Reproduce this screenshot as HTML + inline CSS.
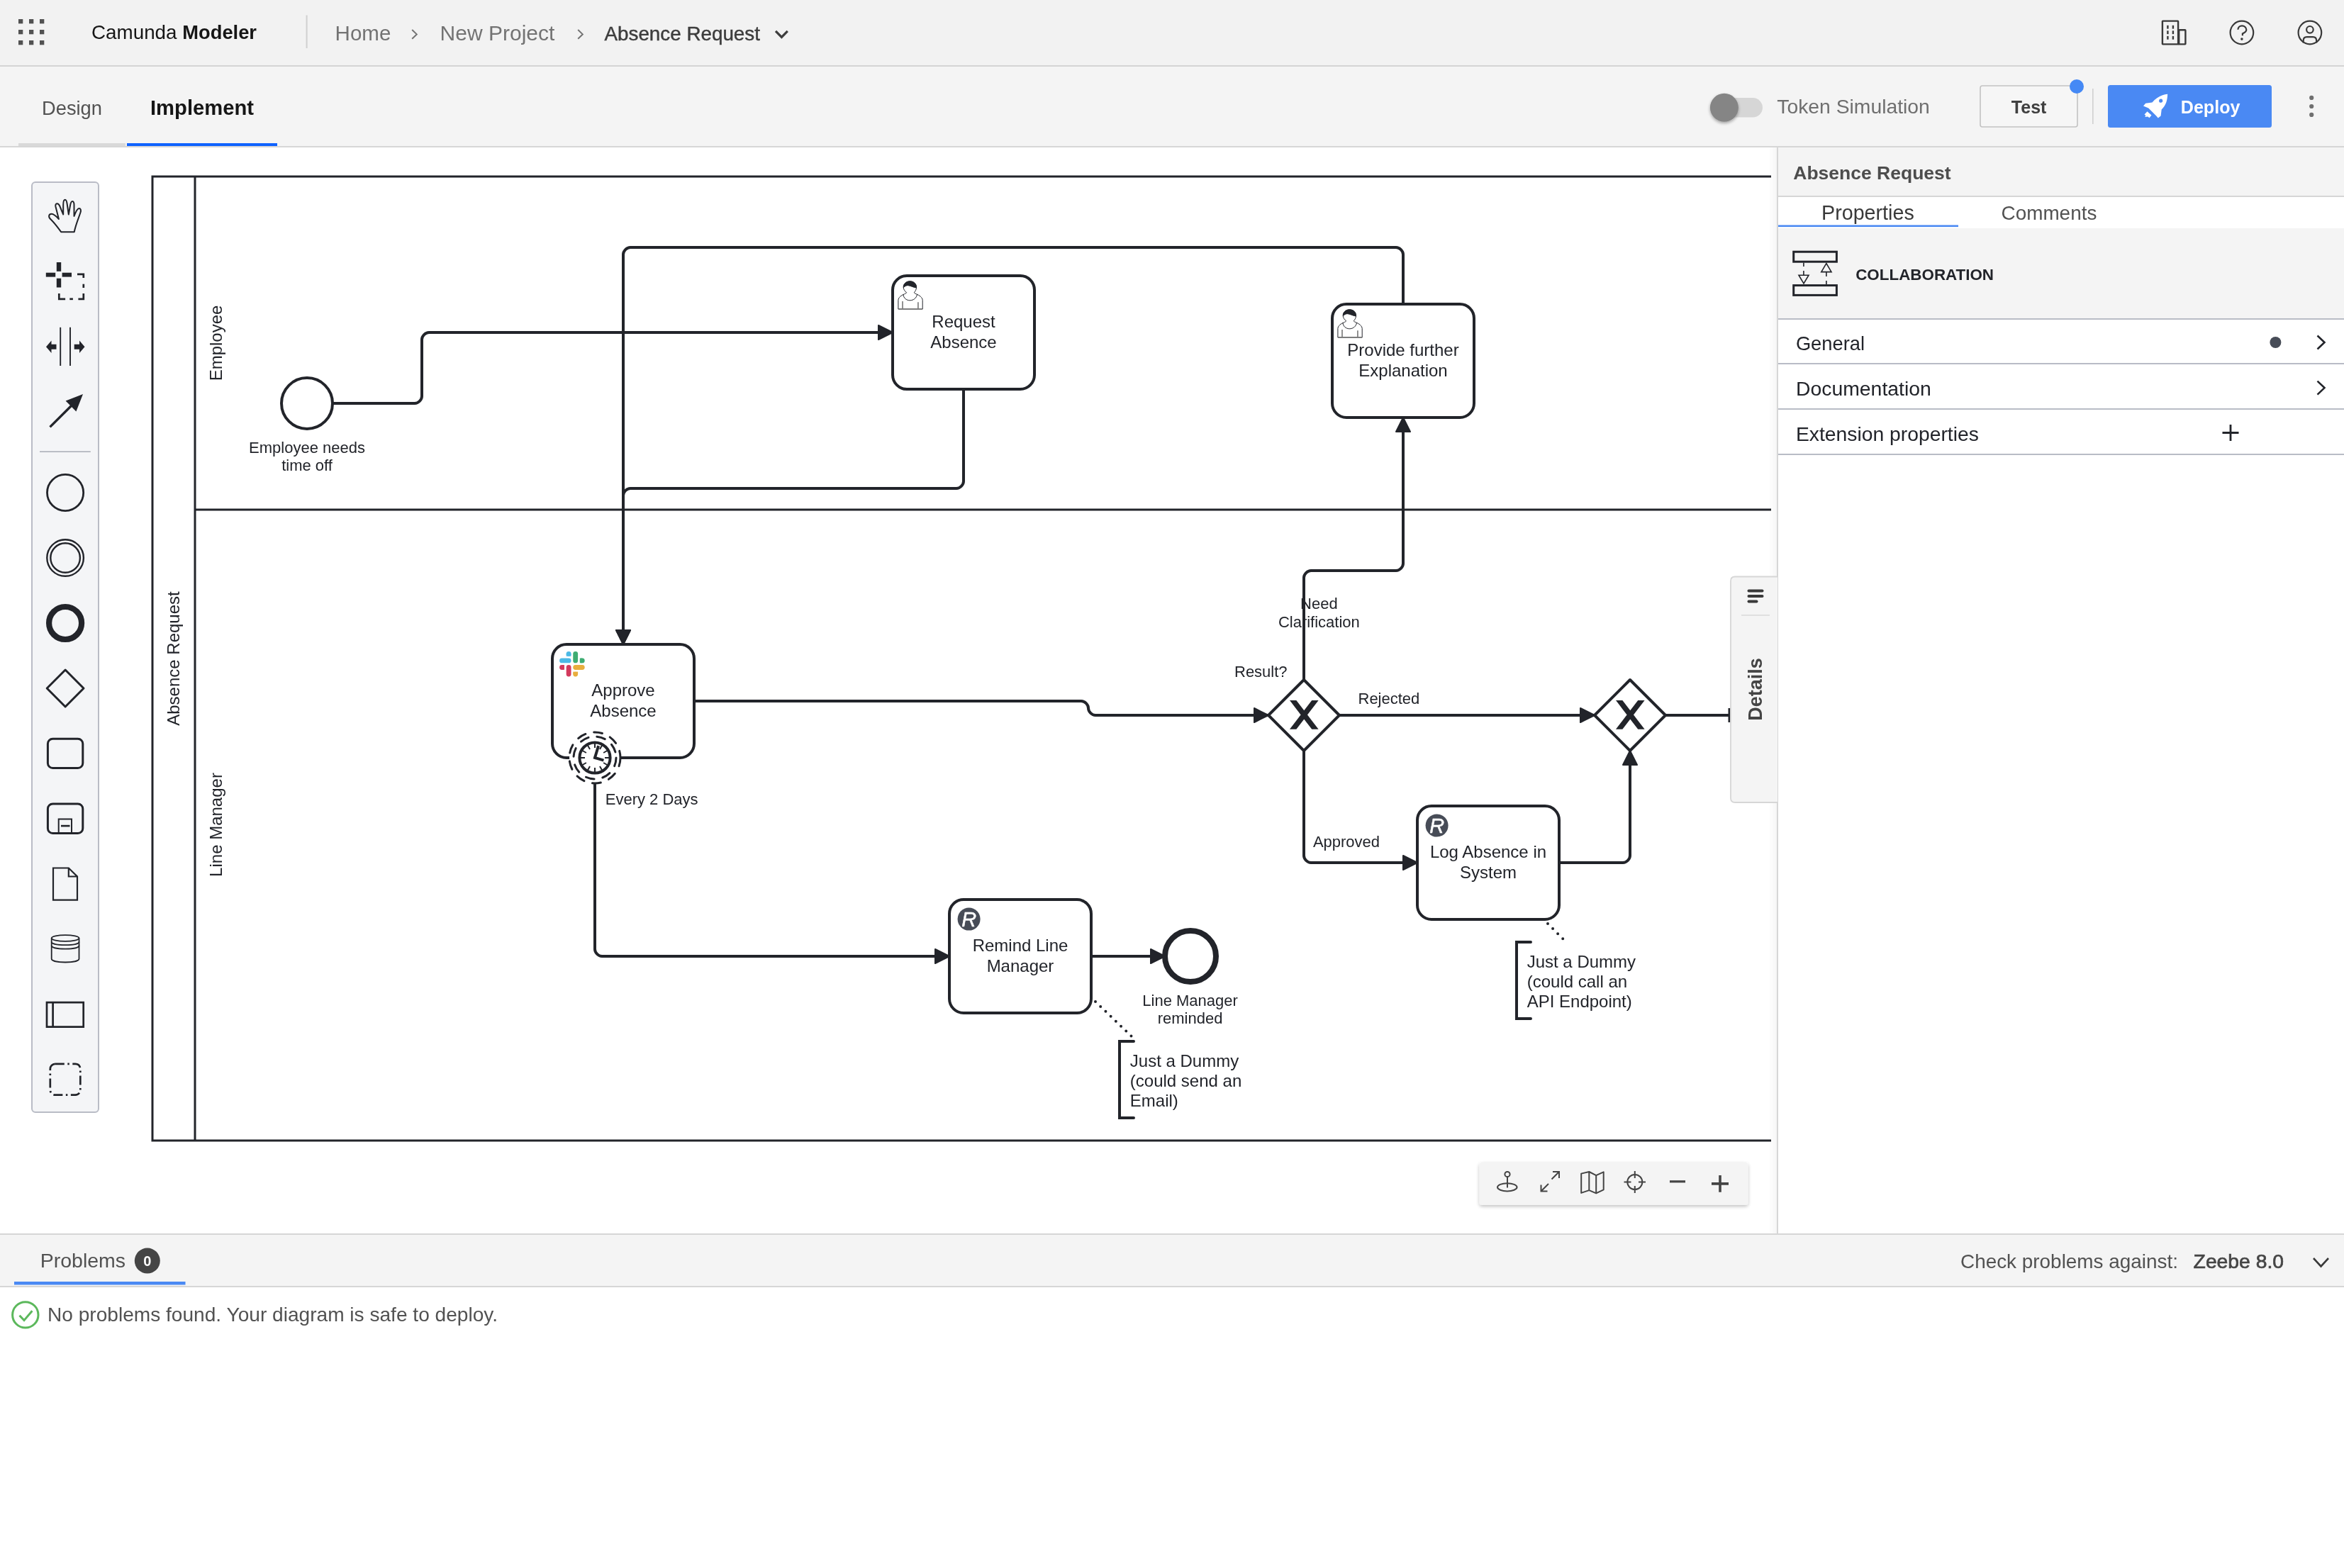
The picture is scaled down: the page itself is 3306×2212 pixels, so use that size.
<!DOCTYPE html>
<html><head><meta charset="utf-8"><style>
html,body{margin:0;padding:0;}
body{width:3306px;height:2212px;position:relative;overflow:hidden;background:#fff;font-family:"Liberation Sans", sans-serif;}
.a{position:absolute;}
svg{position:absolute;left:0;top:0;will-change:transform;}
</style></head><body>
<!-- header -->
<div class="a" style="left:0;top:0;width:3306px;height:92px;background:#f2f2f2;border-bottom:2px solid #d4d4d4"></div>
<!-- tab bar -->
<div class="a" style="left:0;top:94px;width:3306px;height:112px;background:#f4f4f4;border-bottom:2px solid #d6d6d6"></div>
<!-- right panel -->
<div class="a" style="left:2506px;top:208px;width:800px;height:1533px;background:#fff;border-left:2px solid #d6d6d6"></div>
<div class="a" style="left:2508px;top:208px;width:798px;height:68px;background:#f4f4f4;border-bottom:2px solid #d6d6d6"></div>
<div class="a" style="left:2508px;top:322px;width:798px;height:127px;background:#f4f4f4;border-bottom:2px solid #b9bcc6"></div>
<div class="a" style="left:2508px;top:512px;width:798px;height:2px;background:#b9bcc6"></div>
<div class="a" style="left:2508px;top:576px;width:798px;height:2px;background:#b9bcc6"></div>
<div class="a" style="left:2508px;top:640px;width:798px;height:2px;background:#b9bcc6"></div>
<!-- problems -->
<div class="a" style="left:0;top:1740px;width:3306px;height:72px;background:#f4f4f4;border-top:2px solid #d6d6d6;border-bottom:2px solid #d6d6d6"></div>

<svg width="3306" height="2212" viewBox="0 0 3306 2212">
<defs><clipPath id="cv"><rect x="0" y="208" width="2498" height="1532"/></clipPath></defs>
<g clip-path="url(#cv)">
<g transform="translate(215,249) scale(2)">
<rect x="0" y="0" width="1300" height="680" fill="none" stroke="#22242a" stroke-width="1.5"/>
<path d="M 30 0 V 680" stroke="#22242a" stroke-width="1.5"/>
<path d="M 30 235 H 1300" stroke="#22242a" stroke-width="1.5"/>
<path d="M 127 160 L 185.00 160.00 C 187.50 160.00 190.00 157.50 190.00 155.00 L 190.00 115.00 C 190.00 112.50 192.50 110.00 195.00 110.00 L 522 110" fill="none" stroke="#22242a" stroke-width="2" stroke-linejoin="round"/>
<path d="M 522.00 110.00 L 512.00 115.00 L 512.00 105.00 Z" fill="#22242a" stroke="#22242a" stroke-width="1" stroke-linejoin="round"/>
<path d="M 572 150 L 572.00 215.00 C 572.00 217.50 569.50 220.00 567.00 220.00 L 337.00 220.00 C 334.50 220.00 332.00 222.50 332.00 225.00 L 332 330" fill="none" stroke="#22242a" stroke-width="2" stroke-linejoin="round"/>
<path d="M 332.00 330.00 L 327.00 320.00 L 337.00 320.00 Z" fill="#22242a" stroke="#22242a" stroke-width="1" stroke-linejoin="round"/>
<path d="M 882 90 L 882.00 55.00 C 882.00 52.50 879.50 50.00 877.00 50.00 L 337.00 50.00 C 334.50 50.00 332.00 52.50 332.00 55.00 L 332 330" fill="none" stroke="#22242a" stroke-width="2" stroke-linejoin="round"/>
<path d="M 332.00 330.00 L 327.00 320.00 L 337.00 320.00 Z" fill="#22242a" stroke="#22242a" stroke-width="1" stroke-linejoin="round"/>
<path d="M 382 370 L 655.00 370.00 C 657.50 370.00 660.00 372.50 660.00 375.00 L 660.00 375.00 C 660.00 377.50 662.50 380.00 665.00 380.00 L 787 380" fill="none" stroke="#22242a" stroke-width="2" stroke-linejoin="round"/>
<path d="M 787.00 380.00 L 777.00 385.00 L 777.00 375.00 Z" fill="#22242a" stroke="#22242a" stroke-width="1" stroke-linejoin="round"/>
<path d="M 812 355 L 812.00 283.00 C 812.00 280.50 814.50 278.00 817.00 278.00 L 877.00 278.00 C 879.50 278.00 882.00 275.50 882.00 273.00 L 882 170" fill="none" stroke="#22242a" stroke-width="2" stroke-linejoin="round"/>
<path d="M 882.00 170.00 L 887.00 180.00 L 877.00 180.00 Z" fill="#22242a" stroke="#22242a" stroke-width="1" stroke-linejoin="round"/>
<path d="M 837 380 L 1017 380" fill="none" stroke="#22242a" stroke-width="2" stroke-linejoin="round"/>
<path d="M 1017.00 380.00 L 1007.00 385.00 L 1007.00 375.00 Z" fill="#22242a" stroke="#22242a" stroke-width="1" stroke-linejoin="round"/>
<path d="M 812 405 L 812.00 479.00 C 812.00 481.50 814.50 484.00 817.00 484.00 L 892 484" fill="none" stroke="#22242a" stroke-width="2" stroke-linejoin="round"/>
<path d="M 892.00 484.00 L 882.00 489.00 L 882.00 479.00 Z" fill="#22242a" stroke="#22242a" stroke-width="1" stroke-linejoin="round"/>
<path d="M 992 484 L 1037.00 484.00 C 1039.50 484.00 1042.00 481.50 1042.00 479.00 L 1042 405" fill="none" stroke="#22242a" stroke-width="2" stroke-linejoin="round"/>
<path d="M 1042.00 405.00 L 1047.00 415.00 L 1037.00 415.00 Z" fill="#22242a" stroke="#22242a" stroke-width="1" stroke-linejoin="round"/>
<path d="M 312 428 L 312.00 545.00 C 312.00 547.50 314.50 550.00 317.00 550.00 L 562 550" fill="none" stroke="#22242a" stroke-width="2" stroke-linejoin="round"/>
<path d="M 562.00 550.00 L 552.00 555.00 L 552.00 545.00 Z" fill="#22242a" stroke="#22242a" stroke-width="1" stroke-linejoin="round"/>
<path d="M 662 550 L 714 550" fill="none" stroke="#22242a" stroke-width="2" stroke-linejoin="round"/>
<path d="M 714.00 550.00 L 704.00 555.00 L 704.00 545.00 Z" fill="#22242a" stroke="#22242a" stroke-width="1" stroke-linejoin="round"/>
<path d="M 1067 380 L 1112 380" fill="none" stroke="#22242a" stroke-width="2"/>
<path d="M 1112 375 L 1112 385" fill="none" stroke="#22242a" stroke-width="1.5"/>
<path d="M 665 582 L 691 607" fill="none" stroke="#22242a" stroke-width="2" stroke-dasharray="0,5" stroke-linecap="round"/>
<path d="M 984 527 L 995 538" fill="none" stroke="#22242a" stroke-width="2" stroke-dasharray="0,5" stroke-linecap="round"/>
<rect x="522" y="70" width="100" height="80" rx="10" ry="10" fill="#fff" stroke="#22242a" stroke-width="2"/>
<rect x="832" y="90" width="100" height="80" rx="10" ry="10" fill="#fff" stroke="#22242a" stroke-width="2"/>
<rect x="282" y="330" width="100" height="80" rx="10" ry="10" fill="#fff" stroke="#22242a" stroke-width="2"/>
<rect x="892" y="444" width="100" height="80" rx="10" ry="10" fill="#fff" stroke="#22242a" stroke-width="2"/>
<rect x="562" y="510" width="100" height="80" rx="10" ry="10" fill="#fff" stroke="#22242a" stroke-width="2"/>
<circle cx="109" cy="160" r="18" fill="#fff" stroke="#22242a" stroke-width="2"/>
<circle cx="732" cy="550" r="18" fill="#fff" stroke="#22242a" stroke-width="4"/>
<polygon points="812,355 837,380 812,405 787,380" fill="#fff" stroke="#22242a" stroke-width="2" stroke-linejoin="round"/>
<path d="M 803.00 370.00 L 810.43 379.71 L 803.00 389.43 L 806.43 389.43 L 812.14 381.97 L 817.86 389.43 L 821.29 389.43 L 813.86 379.71 L 821.29 370.00 L 817.86 370.00 L 812.14 377.46 L 806.43 370.00 Z" fill="#22242a" stroke="#22242a" stroke-width="1"/>
<polygon points="1042,355 1067,380 1042,405 1017,380" fill="#fff" stroke="#22242a" stroke-width="2" stroke-linejoin="round"/>
<path d="M 1033.00 370.00 L 1040.43 379.71 L 1033.00 389.43 L 1036.43 389.43 L 1042.14 381.97 L 1047.86 389.43 L 1051.29 389.43 L 1043.86 379.71 L 1051.29 370.00 L 1047.86 370.00 L 1042.14 377.46 L 1036.43 370.00 Z" fill="#22242a" stroke="#22242a" stroke-width="1"/>
<circle cx="312" cy="410" r="18" fill="#fff" stroke="#22242a" stroke-width="1.5" stroke-dasharray="6" stroke-linecap="round"/>
<circle cx="312" cy="410" r="15" fill="none" stroke="#22242a" stroke-width="1.5" stroke-dasharray="6" stroke-linecap="round"/>
<circle cx="312" cy="410" r="10.8" fill="#fff" stroke="#22242a" stroke-width="2"/>
<path d="M 312 410 l 2.25 -7.5 m -2.25 7.5 l 5.25 1.5" fill="none" stroke="#22242a" stroke-width="2" stroke-linecap="square"/>
<path d="M 312 417.5 l 0 2.25" stroke="#22242a" stroke-width="1" stroke-linecap="square" transform="rotate(0 312 410)"/>
<path d="M 312 417.5 l 0 2.25" stroke="#22242a" stroke-width="1" stroke-linecap="square" transform="rotate(30 312 410)"/>
<path d="M 312 417.5 l 0 2.25" stroke="#22242a" stroke-width="1" stroke-linecap="square" transform="rotate(60 312 410)"/>
<path d="M 312 417.5 l 0 2.25" stroke="#22242a" stroke-width="1" stroke-linecap="square" transform="rotate(90 312 410)"/>
<path d="M 312 417.5 l 0 2.25" stroke="#22242a" stroke-width="1" stroke-linecap="square" transform="rotate(120 312 410)"/>
<path d="M 312 417.5 l 0 2.25" stroke="#22242a" stroke-width="1" stroke-linecap="square" transform="rotate(150 312 410)"/>
<path d="M 312 417.5 l 0 2.25" stroke="#22242a" stroke-width="1" stroke-linecap="square" transform="rotate(180 312 410)"/>
<path d="M 312 417.5 l 0 2.25" stroke="#22242a" stroke-width="1" stroke-linecap="square" transform="rotate(210 312 410)"/>
<path d="M 312 417.5 l 0 2.25" stroke="#22242a" stroke-width="1" stroke-linecap="square" transform="rotate(240 312 410)"/>
<path d="M 312 417.5 l 0 2.25" stroke="#22242a" stroke-width="1" stroke-linecap="square" transform="rotate(270 312 410)"/>
<path d="M 312 417.5 l 0 2.25" stroke="#22242a" stroke-width="1" stroke-linecap="square" transform="rotate(300 312 410)"/>
<path d="M 312 417.5 l 0 2.25" stroke="#22242a" stroke-width="1" stroke-linecap="square" transform="rotate(330 312 410)"/>
<path d="M 692 610 L 682 610 L 682 664 L 692 664" fill="none" stroke="#22242a" stroke-width="2" stroke-linecap="round"/>
<path d="M 972 540 L 962 540 L 962 594 L 972 594" fill="none" stroke="#22242a" stroke-width="2" stroke-linecap="round"/>
<g transform="translate(522,70)" stroke="#22242a" stroke-width="0.5" fill="#fff"><path d="M 3.95 23.5 L 3.95 17.3 C 3.95 15.3 6.2 13.8 8.3 12.9 C 9 12.6 9.6 12.3 9.85 11.9 C 8.6 11 7.6 9.6 7.6 8.1 C 7.6 5.6 9.7 3.9 12.2 3.9 C 14.7 3.9 16.8 5.6 16.8 8.1 C 16.8 9.6 16 11 15.1 11.9 C 15.4 12.3 16 12.6 16.7 12.9 C 18.8 13.8 21.1 15.3 21.1 17.3 L 21.1 23.5 Z"/><path d="M 7.47 13.1 C 7.6 15.6 9.6 17.4 12.2 17.4 C 14.8 17.4 16.9 15.6 17.27 13.1" fill="none"/><path d="M 7.0 18.0 V 23.3 M 17.96 18.6 V 23.3" fill="none" stroke="#777" stroke-width="0.8"/><path d="M 3.95 23.5 H 21.1" fill="none" stroke="#777" stroke-width="0.7"/><path d="M 7.7 8.3 C 8.6 7.2 10 6.7 11 6.85 C 12.8 7.1 14.8 8.3 16.7 8.5 C 16.9 5.8 14.8 3.9 12.2 3.9 C 9.6 3.9 7.5 5.8 7.7 8.3 Z" fill="#22242a"/></g>
<g transform="translate(832,90)" stroke="#22242a" stroke-width="0.5" fill="#fff"><path d="M 3.95 23.5 L 3.95 17.3 C 3.95 15.3 6.2 13.8 8.3 12.9 C 9 12.6 9.6 12.3 9.85 11.9 C 8.6 11 7.6 9.6 7.6 8.1 C 7.6 5.6 9.7 3.9 12.2 3.9 C 14.7 3.9 16.8 5.6 16.8 8.1 C 16.8 9.6 16 11 15.1 11.9 C 15.4 12.3 16 12.6 16.7 12.9 C 18.8 13.8 21.1 15.3 21.1 17.3 L 21.1 23.5 Z"/><path d="M 7.47 13.1 C 7.6 15.6 9.6 17.4 12.2 17.4 C 14.8 17.4 16.9 15.6 17.27 13.1" fill="none"/><path d="M 7.0 18.0 V 23.3 M 17.96 18.6 V 23.3" fill="none" stroke="#777" stroke-width="0.8"/><path d="M 3.95 23.5 H 21.1" fill="none" stroke="#777" stroke-width="0.7"/><path d="M 7.7 8.3 C 8.6 7.2 10 6.7 11 6.85 C 12.8 7.1 14.8 8.3 16.7 8.5 C 16.9 5.8 14.8 3.9 12.2 3.9 C 9.6 3.9 7.5 5.8 7.7 8.3 Z" fill="#22242a"/></g>
<circle cx="905.8" cy="457.8" r="8" fill="#474c57"/>
<text x="905.9" y="463.1" text-anchor="middle" font-family='"Liberation Sans", sans-serif' font-size="14.5" font-style="italic" fill="#fff" stroke="#fff" stroke-width="0.25">R</text>
<circle cx="575.8" cy="523.8" r="8" fill="#474c57"/>
<text x="575.9" y="529.1" text-anchor="middle" font-family='"Liberation Sans", sans-serif' font-size="14.5" font-style="italic" fill="#fff" stroke="#fff" stroke-width="0.25">R</text>
<g transform="translate(287.05,334.95) scale(0.342)"><rect x="14" y="0" width="10" height="10" rx="5" fill="#4cb9e6"/><rect x="14" y="5" width="10" height="5" fill="#4cb9e6"/><rect x="0" y="14" width="24" height="10" rx="5" fill="#4cb9e6"/><rect x="28" y="0" width="10" height="24" rx="5" fill="#3eac72"/><rect x="42" y="14" width="10" height="10" rx="5" fill="#3eac72"/><rect x="42" y="14" width="5" height="10" fill="#3eac72"/><rect x="0" y="28" width="10" height="10" rx="5" fill="#d33a5d"/><rect x="5" y="28" width="5" height="10" fill="#d33a5d"/><rect x="14" y="28" width="10" height="24" rx="5" fill="#d33a5d"/><rect x="28" y="28" width="24" height="10" rx="5" fill="#e8ae3e"/><rect x="28" y="42" width="10" height="10" rx="5" fill="#e8ae3e"/><rect x="28" y="42" width="10" height="5" fill="#e8ae3e"/></g>
</g>
<g font-family='"Liberation Sans", sans-serif' fill="#22242a">
<text x="1359" y="462" font-size="24" text-anchor="middle" >Request</text>
<text x="1359" y="490.5" font-size="24" text-anchor="middle" >Absence</text>
<text x="1979" y="502" font-size="24" text-anchor="middle" >Provide further</text>
<text x="1979" y="530.7" font-size="24" text-anchor="middle" >Explanation</text>
<text x="879" y="982" font-size="24" text-anchor="middle" >Approve</text>
<text x="879" y="1011" font-size="24" text-anchor="middle" >Absence</text>
<text x="2099" y="1210" font-size="24" text-anchor="middle" >Log Absence in</text>
<text x="2099" y="1238.6" font-size="24" text-anchor="middle" >System</text>
<text x="1439" y="1341.7" font-size="24" text-anchor="middle" >Remind Line</text>
<text x="1439" y="1370.9" font-size="24" text-anchor="middle" >Manager</text>
<text x="433" y="638.9" font-size="22" text-anchor="middle" >Employee needs</text>
<text x="433" y="663.9" font-size="22" text-anchor="middle" >time off</text>
<text x="853.75" y="1134.5" font-size="22" text-anchor="start" >Every 2 Days</text>
<text x="1741" y="955.2" font-size="22" text-anchor="start" >Result?</text>
<text x="1860.35" y="859" font-size="22" text-anchor="middle" >Need</text>
<text x="1860.35" y="884.7" font-size="22" text-anchor="middle" >Clarification</text>
<text x="1915.5" y="993" font-size="22" text-anchor="start" >Rejected</text>
<text x="1851.9" y="1194.7" font-size="22" text-anchor="start" >Approved</text>
<text x="1678.6" y="1419" font-size="22" text-anchor="middle" >Line Manager</text>
<text x="1678.6" y="1444.3" font-size="22" text-anchor="middle" >reminded</text>
<text x="1593.8" y="1504.7" font-size="24" text-anchor="start" >Just a Dummy</text>
<text x="1593.8" y="1532.7" font-size="24" text-anchor="start" >(could send an</text>
<text x="1593.8" y="1560.5" font-size="24" text-anchor="start" >Email)</text>
<text x="2153.7" y="1364.8" font-size="24" text-anchor="start" >Just a Dummy</text>
<text x="2153.7" y="1392.8" font-size="24" text-anchor="start" >(could call an</text>
<text x="2153.7" y="1420.8" font-size="24" text-anchor="start" >API Endpoint)</text>
<text transform="translate(252.5,929) rotate(-90)" font-size="24" text-anchor="middle">Absence Request</text>
<text transform="translate(312.5,484) rotate(-90)" font-size="24" text-anchor="middle">Employee</text>
<text transform="translate(312.5,1163.5) rotate(-90)" font-size="24" text-anchor="middle">Line Manager</text>
</g>
</g>
<g font-family='"Liberation Sans", sans-serif'>
<rect x="26" y="27" width="6.3" height="6.3" fill="#525252"/>
<rect x="26" y="42" width="6.3" height="6.3" fill="#525252"/>
<rect x="26" y="57" width="6.3" height="6.3" fill="#525252"/>
<rect x="41" y="27" width="6.3" height="6.3" fill="#525252"/>
<rect x="41" y="42" width="6.3" height="6.3" fill="#525252"/>
<rect x="41" y="57" width="6.3" height="6.3" fill="#525252"/>
<rect x="56" y="27" width="6.3" height="6.3" fill="#525252"/>
<rect x="56" y="42" width="6.3" height="6.3" fill="#525252"/>
<rect x="56" y="57" width="6.3" height="6.3" fill="#525252"/>
<text x="129" y="54.8" font-size="27.8" fill="#161616" text-anchor="start" font-weight="normal" >Camunda</text>
<text x="257.3" y="54.8" font-size="27.3" fill="#161616" text-anchor="start" font-weight="bold" >Modeler</text>
<rect x="431.6" y="21.5" width="2" height="46.5" fill="#d0d0d0"/>
<text x="472.6" y="57.2" font-size="29.5" fill="#737373" text-anchor="start" font-weight="normal" >Home</text>
<path d="M 581.2 42 L 587.8 48.4 L 581.2 54.8" fill="none" stroke="#737373" stroke-width="2"/>
<text x="620.6" y="57.2" font-size="30" fill="#737373" text-anchor="start" font-weight="normal" >New Project</text>
<path d="M 815.2 42 L 821.8 48.4 L 815.2 54.8" fill="none" stroke="#737373" stroke-width="2"/>
<text x="852.5" y="57.2" font-size="27.8" fill="#3d3d3d" text-anchor="start" font-weight="normal" stroke="#3d3d3d" stroke-width="0.45">Absence Request</text>
<path d="M 1094 43.8 L 1102.4 52.4 L 1110.8 43.8" fill="none" stroke="#3d3d3d" stroke-width="3.2"/>
<g fill="none" stroke="#393939" stroke-width="2.4"><rect x="3049.9" y="29.6" width="22.2" height="32.8" rx="0.6"/><rect x="3073.2" y="42.3" width="9.2" height="20.1" rx="0.6"/><path d="M 3072.1 62.4 L 3073.2 62.4"/></g>
<rect x="3056.2000000000003" y="35.800000000000004" width="2.4" height="4.8" fill="#393939"/>
<rect x="3056.2000000000003" y="43.300000000000004" width="2.4" height="4.8" fill="#393939"/>
<rect x="3056.2000000000003" y="50.9" width="2.4" height="4.8" fill="#393939"/>
<rect x="3063.7000000000003" y="35.800000000000004" width="2.4" height="4.8" fill="#393939"/>
<rect x="3063.7000000000003" y="43.300000000000004" width="2.4" height="4.8" fill="#393939"/>
<rect x="3063.7000000000003" y="50.9" width="2.4" height="4.8" fill="#393939"/>
<circle cx="3161.9" cy="46" r="16.3" fill="none" stroke="#393939" stroke-width="2.2"/>
<path d="M 3156.4 41.8 C 3156.6 38.6 3159 36.4 3162.2 36.4 C 3165.5 36.4 3168.3 38.8 3168.3 42 C 3168.3 45.2 3165.8 46.2 3162.9 47.4 L 3162.9 50.2" fill="none" stroke="#393939" stroke-width="2.2"/>
<circle cx="3161.9" cy="55.1" r="1.8" fill="#393939"/>
<circle cx="3257.9" cy="46" r="16.3" fill="none" stroke="#393939" stroke-width="2.2"/>
<circle cx="3257.9" cy="41.8" r="4.8" fill="none" stroke="#393939" stroke-width="2.2"/>
<path d="M 3248.7 60.5 L 3248.7 57.2 C 3248.7 54 3250.5 52.2 3253.5 52.2 L 3262.3 52.2 C 3265.3 52.2 3267.1 54 3267.1 57.2 L 3267.1 60.5" fill="none" stroke="#393939" stroke-width="2.2"/>
<text x="59" y="162" font-size="27.3" fill="#525252" text-anchor="start" font-weight="normal" >Design</text>
<text x="212" y="162" font-size="29.2" fill="#161616" text-anchor="start" font-weight="bold" >Implement</text>
<rect x="26" y="202" width="151" height="4" fill="#d9d9d9"/>
<rect x="179" y="202" width="212" height="4" fill="#0f62fe"/>
<defs><filter id="sh" x="-50%" y="-50%" width="200%" height="200%"><feGaussianBlur in="SourceAlpha" stdDeviation="2"/><feOffset dy="2"/><feComponentTransfer><feFuncA type="linear" slope="0.35"/></feComponentTransfer><feMerge><feMergeNode/><feMergeNode in="SourceGraphic"/></feMerge></filter><filter id="sh2" x="-20%" y="-50%" width="140%" height="200%"><feGaussianBlur in="SourceAlpha" stdDeviation="2.5"/><feOffset dy="2"/><feComponentTransfer><feFuncA type="linear" slope="0.25"/></feComponentTransfer><feMerge><feMergeNode/><feMergeNode in="SourceGraphic"/></feMerge></filter></defs>
<rect x="2416" y="138.1" width="70" height="27.5" rx="13.75" fill="#d6d6d6"/>
<circle cx="2431.9" cy="151.8" r="20" fill="#858585" filter="url(#sh)"/>
<text x="2506.3" y="159.9" font-size="28.3" fill="#6f6f6f" text-anchor="start" font-weight="normal" >Token Simulation</text>
<rect x="2793" y="121" width="137" height="58" rx="3" fill="#f6f6f6" stroke="#c2c2c2" stroke-width="1.6"/>
<text x="2861.6" y="159.8" font-size="25" fill="#404040" text-anchor="middle" font-weight="bold" >Test</text>
<circle cx="2929" cy="122" r="10" fill="#4589f5"/>
<rect x="2951" y="125" width="1.6" height="50" fill="#d0d0d0"/>
<rect x="2973" y="120" width="231" height="60" rx="3.5" fill="#4a89f3"/>
<path d="M 3057.2 132.8 C 3049 133.5 3041.5 137.5 3035.5 144.5 L 3026.2 145.8 L 3023 149.6 L 3030.2 152.6 L 3041 163.2 L 3043.8 166.4 L 3047.6 163.4 L 3048.7 154.4 C 3055.5 148 3056.8 140.8 3057.2 132.8 Z" fill="#fff"/>
<circle cx="3047.7" cy="142.2" r="2.6" fill="#4a89f3"/>
<path d="M 3028.5 157.2 L 3024.5 161.4 L 3026.3 162.8 L 3025.3 165 L 3029.2 164.6 L 3031.5 166.2 L 3034.5 162.4 Z" fill="#fff"/>
<text x="3075.8" y="160" font-size="25.1" fill="#ffffff" text-anchor="start" font-weight="bold" >Deploy</text>
<circle cx="3260.2" cy="137.9" r="3.1" fill="#6f6f6f"/>
<circle cx="3260.2" cy="150" r="3.1" fill="#6f6f6f"/>
<circle cx="3260.2" cy="161.9" r="3.1" fill="#6f6f6f"/>
<rect x="45" y="257" width="94" height="1312" rx="5" fill="#f4f5f7" stroke="#b9bcc6" stroke-width="2"/>
<path d="M 86.1 327.2 H 104.7 C 107 316 111.5 306 113.4 300 C 114.6 296.5 113.8 293.9 111.4 293.9 C 109.6 293.9 108 295.6 104.5 304.9 V 289.5 C 104.5 285.6 103.6 283.9 102.2 283.9 C 100.6 283.9 99.6 286.2 99 290 L 96.8 302.6 L 94.7 288 C 94.1 283.8 93.2 281.7 91.85 281.7 C 90.2 281.7 89.2 284.2 89.2 289 V 302.6 L 84.2 290.5 C 83.2 288.3 82.2 287.2 80.75 287.2 C 78.9 287.2 77.9 288.6 78.4 291.2 L 82.9 309.1 C 78.5 304.2 75.6 301.8 72.9 301.8 C 70.8 301.8 69.2 303.2 69.1 305 C 69 307 70.4 308.5 72.4 310.3 C 78 316 82 321.5 86.1 327.2 Z" fill="none" stroke="#22242a" stroke-width="2" stroke-linejoin="round"/>
<g fill="#22242a"><rect x="79.8" y="370" width="6.4" height="12.8"/><rect x="79.8" y="392.7" width="6.4" height="12.8"/><rect x="64.8" y="384.7" width="13.4" height="5.9"/><rect x="87.6" y="384.7" width="13.4" height="5.9"/></g>
<g fill="none" stroke="#22242a" stroke-width="2.7"><path d="M 109 386.8 H 117.8 V 392"/><path d="M 117.8 400.7 V 406"/><path d="M 117.8 414 V 421.8 H 110.4"/><path d="M 98.3 421.8 H 102.9"/><path d="M 92.1 421.8 H 83.3 V 414"/></g>
<g fill="none" stroke="#22242a" stroke-width="1.9"><path d="M 85.2 461.8 V 516"/><path d="M 99 461.8 V 516"/></g>
<path d="M 65 489.3 L 72.5 480.5 L 72.5 485.8 L 79.5 485.8 L 79.5 492.8 L 72.5 492.8 L 72.5 498.1 Z" fill="#22242a"/>
<path d="M 119.5 489.3 L 112 480.5 L 112 485.8 L 104.7 485.8 L 104.7 492.8 L 112 492.8 L 112 498.1 Z" fill="#22242a"/>
<path d="M 70.5 602.4 L 104 569" fill="none" stroke="#22242a" stroke-width="3.4"/>
<path d="M 117 556 L 92.6 565.6 L 107.4 580.4 Z" fill="#22242a"/>
<rect x="56" y="636.5" width="71.8" height="1.4" fill="#a2a6b0"/>
<circle cx="92.1" cy="695" r="25.6" fill="none" stroke="#22242a" stroke-width="2.8"/>
<circle cx="92.1" cy="787" r="25.8" fill="none" stroke="#22242a" stroke-width="2.4"/>
<circle cx="92.1" cy="787" r="20.8" fill="none" stroke="#22242a" stroke-width="2.4"/>
<circle cx="92.1" cy="879" r="23" fill="none" stroke="#22242a" stroke-width="8.2"/>
<path d="M 92.1 945 L 118 971 L 92.1 997 L 66.2 971 Z" fill="none" stroke="#22242a" stroke-width="3" stroke-linejoin="round"/>
<rect x="67.4" y="1042.2" width="49.4" height="41.3" rx="7" fill="none" stroke="#22242a" stroke-width="3"/>
<rect x="67.4" y="1134" width="49.4" height="41.6" rx="7" fill="none" stroke="#22242a" stroke-width="3"/>
<path d="M 82.7 1175.6 V 1155.6 H 101 V 1175.6" fill="none" stroke="#22242a" stroke-width="2"/>
<rect x="86" y="1163.8" width="12.5" height="2.6" fill="#22242a"/>
<path d="M 75 1224.5 H 96.8 L 109 1236.5 V 1269.6 H 75 Z M 96.8 1224.5 V 1236.5 H 109" fill="none" stroke="#22242a" stroke-width="2.2"/>
<g fill="none" stroke="#22242a" stroke-width="1.8"><ellipse cx="92.1" cy="1323.5" rx="19.4" ry="4.4"/><path d="M 72.7 1323.5 V 1352.5 C 72.7 1355.5 81 1357.5 92.1 1357.5 C 103.2 1357.5 111.5 1355.5 111.5 1352.5 V 1323.5"/><path d="M 72.7 1328.8 C 72.7 1331.6 81 1333.2 92.1 1333.2 C 103.2 1333.2 111.5 1331.6 111.5 1328.8"/><path d="M 72.7 1334 C 72.7 1336.8 81 1338.6 92.1 1338.6 C 103.2 1338.6 111.5 1336.8 111.5 1334"/></g>
<path d="M 66 1414.2 H 117.7 V 1448.6 H 66 Z M 74.6 1414.2 V 1448.6" fill="none" stroke="#22242a" stroke-width="2.7"/>
<rect x="70.8" y="1500.9" width="42.5" height="43.7" rx="7" fill="none" stroke="#22242a" stroke-width="2.7" stroke-dasharray="13 4.5 2.5 4.5"/>
<defs><linearGradient id="psh" x1="0" x2="1"><stop offset="0" stop-color="#000" stop-opacity="0"/><stop offset="1" stop-color="#000" stop-opacity="0.035"/></linearGradient></defs><rect x="2494" y="208" width="12" height="1532" fill="url(#psh)"/>
<text x="2529.3" y="252.9" font-size="26.5" fill="#4d4d4d" text-anchor="start" font-weight="bold" >Absence Request</text>
<text x="2569" y="310" font-size="28.7" fill="#393939" text-anchor="start" font-weight="normal" >Properties</text>
<text x="2822.5" y="310" font-size="27.9" fill="#525252" text-anchor="start" font-weight="normal" >Comments</text>
<rect x="2508" y="317.5" width="254" height="2.6" fill="#4a89f3"/>
<g fill="none" stroke="#22242a" stroke-width="3"><rect x="2529.7" y="355.2" width="60.7" height="14"/><rect x="2529.7" y="402.6" width="60.7" height="13.8"/></g>
<g fill="none" stroke="#22242a" stroke-width="1.6"><path d="M 2543.9 370.5 V 376 M 2543.9 382 V 388"/><path d="M 2537 388.2 H 2551 L 2544 400 Z"/><path d="M 2575.9 384 V 390 M 2575.9 396 V 401"/><path d="M 2568.8 383.6 H 2583 L 2575.9 371.6 Z"/></g>
<text x="2617.2" y="395" font-size="22.4" fill="#22242a" text-anchor="start" font-weight="bold" >COLLABORATION</text>
<text x="2532.9" y="494" font-size="27.3" fill="#22242a" text-anchor="start" font-weight="normal" >General</text>
<circle cx="3209.4" cy="483" r="8" fill="#474c57"/>
<path d="M 3268.5 473.5 L 3278.5 483 L 3268.5 492.5" fill="none" stroke="#22242a" stroke-width="2.6"/>
<text x="2532.9" y="557.6" font-size="28.4" fill="#22242a" text-anchor="start" font-weight="normal" >Documentation</text>
<path d="M 3268.5 537.6 L 3278.5 547.1 L 3268.5 556.6" fill="none" stroke="#22242a" stroke-width="2.6"/>
<text x="2532.9" y="621.8" font-size="28.3" fill="#22242a" text-anchor="start" font-weight="normal" >Extension properties</text>
<path d="M 3134.5 610.5 H 3157.5 M 3146 599 V 622" fill="none" stroke="#22242a" stroke-width="2.8"/>
<path d="M 2507 813.5 H 2447 Q 2441 813.5 2441 819.5 V 1126 Q 2441 1132 2447 1132 H 2507" fill="#f4f4f4" stroke="#d6d6d6" stroke-width="1.8"/>
<g stroke="#393939" stroke-width="4" stroke-linecap="round"><path d="M 2466.5 833.5 H 2485.5"/><path d="M 2466.5 841 H 2485.5"/><path d="M 2466.5 848.6 H 2477.5"/></g>
<rect x="2456" y="867.2" width="40" height="1.4" fill="#d6d6d6"/>
<text transform="translate(2484.5,972.5) rotate(-90)" font-size="27" font-weight="bold" fill="#444" text-anchor="middle">Details</text>
<rect x="2086.5" y="1640" width="379" height="60" rx="4" fill="#f4f4f4" filter="url(#sh2)"/>
<g fill="none" stroke="#444" stroke-width="2"><circle cx="2126" cy="1656.5" r="3.6"/><path d="M 2126 1660 V 1675.5"/><ellipse cx="2125.8" cy="1674.8" rx="13.8" ry="5.6"/></g>
<g fill="none" stroke="#444" stroke-width="2"><path d="M 2188.5 1663.5 L 2199 1653 M 2190 1653 H 2199 V 1662 M 2173.5 1680.5 L 2184 1670 M 2173.5 1671.5 V 1680.5 H 2182.5"/></g>
<g fill="none" stroke="#444" stroke-width="2" stroke-linejoin="round"><path d="M 2230.2 1655.6 L 2241.3 1653 L 2251.2 1658.2 L 2261.7 1653.4 V 1678.3 L 2251.2 1683.4 L 2241.3 1679.1 L 2230.2 1682.9 Z M 2241.3 1653 V 1679.1 M 2251.2 1658.2 V 1683.4"/></g>
<g fill="none" stroke="#444" stroke-width="2"><circle cx="2305.8" cy="1667.5" r="10.5"/><path d="M 2305.8 1652 V 1662 M 2305.8 1673 V 1683 M 2290.5 1667.5 H 2300.5 M 2311 1667.5 H 2321"/></g>
<path d="M 2355 1666.8 H 2377" stroke="#444" stroke-width="3.2"/>
<path d="M 2414 1669.9 H 2438 M 2426 1658 V 1681.7" stroke="#444" stroke-width="3.6"/>
<text x="56.7" y="1787.7" font-size="28.5" fill="#525252" text-anchor="start" font-weight="normal" >Problems</text>
<circle cx="207.8" cy="1778.6" r="18" fill="#454545"/>
<text x="207.8" y="1785.8" font-size="20" fill="#ffffff" text-anchor="middle" font-weight="bold" >0</text>
<rect x="20" y="1808" width="241.5" height="4.5" fill="#4a89f3"/>
<text x="2765" y="1788.7" font-size="27.9" fill="#525252" text-anchor="start" font-weight="normal" >Check problems against:</text>
<text x="3093.6" y="1788.7" font-size="28.3" fill="#454545" text-anchor="start" font-weight="normal" stroke="#454545" stroke-width="0.7">Zeebe 8.0</text>
<path d="M 3263 1775 L 3273.5 1786.5 L 3284 1775" fill="none" stroke="#393939" stroke-width="2.6"/>
<circle cx="35.8" cy="1854.9" r="18.2" fill="none" stroke="#5cb85c" stroke-width="3"/>
<path d="M 27.5 1855.7 L 34 1862.6 L 45.4 1849.2" fill="none" stroke="#5cb85c" stroke-width="3"/>
<text x="67" y="1863.7" font-size="28.1" fill="#525252" text-anchor="start" font-weight="normal" >No problems found. Your diagram is safe to deploy.</text>
</g>
</svg>
</body></html>
